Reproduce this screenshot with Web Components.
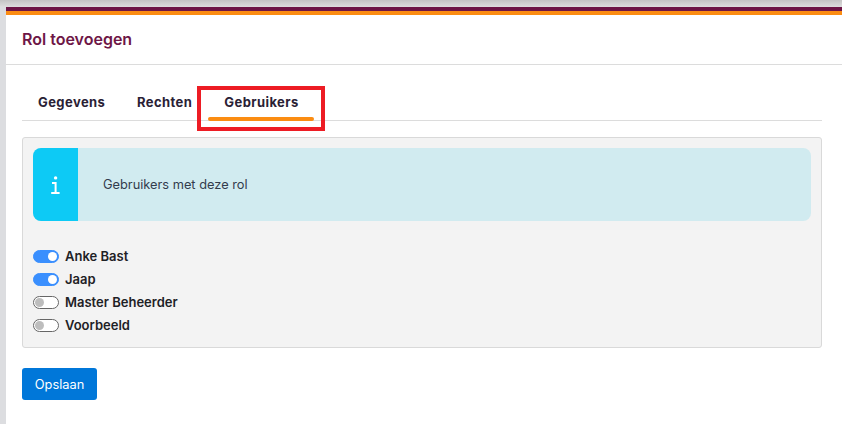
<!DOCTYPE html>
<html lang="nl"><head><meta charset="utf-8"><title>Rol toevoegen</title>
<style>
html,body{margin:0;height:100%;background:#fff;font-family:Inter,"Liberation Sans",sans-serif;overflow:hidden}
</style></head><body>
<role-page>
  <span slot="title">Rol toevoegen</span>
  <tab-bar slot="tabs">
    <tab-item style="--w:99px">Gegevens</tab-item>
    <tab-item style="--w:76px">Rechten</tab-item>
    <tab-item active highlighted style="--w:129px">Gebruikers</tab-item>
  </tab-bar>
  <info-alert>Gebruikers met deze rol</info-alert>
  <user-list>
    <user-toggle checked>Anke Bast</user-toggle>
    <user-toggle checked>Jaap</user-toggle>
    <user-toggle>Master Beheerder</user-toggle>
    <user-toggle>Voorbeeld</user-toggle>
  </user-list>
  <save-button slot="actions">Opslaan</save-button>
</role-page>
<script>
function def(name, css, html){
  customElements.define(name, class extends HTMLElement{
    constructor(){super();this.attachShadow({mode:'open'}).innerHTML='<style>'+css+'</style>'+html;}
  });
}
def('role-page',`
:host{display:flex;flex-direction:column;height:424px;box-sizing:border-box;background:#dcdde0}
.top{flex:none;height:7px;background:linear-gradient(#c4c4c4,#dedede)}
.shell{flex:1;margin-left:6px;background:#fff}
.maroon{height:4px;background:#6e1646}
.orange{height:4px;background:#fb8c12}
.head{height:50px;box-sizing:border-box;border-bottom:1px solid #dcdcdc;padding:0 16px 2px;display:flex;align-items:center}
.title{font-size:16px;font-weight:600;color:#6e1646;line-height:20px}
.body{padding:21px 20px 0 16px}
.panel{margin-top:16px;height:211px;box-sizing:border-box;border:1px solid #d9d9d9;border-radius:3px;background:#f3f3f3;padding:10px}
.actions{margin-top:20px}
`,`<div class="top"></div><div class="shell">
<div class="maroon"></div><div class="orange"></div>
<div class="head"><div class="title"><slot name="title"></slot></div></div>
<div class="body"><slot name="tabs"></slot>
<div class="panel"><slot></slot></div>
<div class="actions"><slot name="actions"></slot></div></div></div>`);
def('tab-bar',`
:host{display:flex;height:35px;box-sizing:border-box;border-bottom:1px solid #dcdcdc;position:relative}
`,`<slot></slot>`);
def('tab-item',`
:host{display:block;position:relative;box-sizing:border-box;width:var(--w);height:35px;text-align:center;padding-top:8px;font-size:13px;line-height:16px;font-weight:700;letter-spacing:.42px;color:#2a2135}
:host(:first-child){text-align:left;padding-left:16px}
:host(:nth-child(2)){text-align:left;padding-left:16px}
.bar{display:none;position:absolute;left:11px;right:12px;bottom:0;height:4px;border-radius:2px;background:#fb8c12}
:host([active]) .bar{display:block}
.mark{display:none;position:absolute;left:0;top:0;width:128px;height:45px;box-sizing:border-box;border:4px solid #ed1c24}
:host([highlighted]) .mark{display:block}
`,`<slot></slot><span class="bar"></span><span class="mark"></span>`);
def('info-alert',`
:host{display:flex;height:73px;border-radius:8px;overflow:hidden;background:#d1ebf0;color:#333c4d;font-size:12.8px;line-height:16px}
.ic{flex:none;width:45px;background:#0dcaf5;display:flex;align-items:center;justify-content:center;color:#fff}
.ic svg{display:block;width:9px;height:18px}
.tx{padding-left:25px;display:flex;align-items:center}
`,`<div class="ic"><svg viewBox="0 0 9 18"><circle cx="4.6" cy="1.9" r="1.7" fill="#fff"/><path d="M1 7H4.6V17M.2 17H8.6" fill="none" stroke="#fff" stroke-width="2"/></svg></div><div class="tx"><slot></slot></div>`);
def('user-list',`
:host{display:flex;flex-direction:column;gap:5px;margin-top:26px}
`,`<slot></slot>`);
def('user-toggle',`
:host{display:flex;align-items:center;gap:6px;height:18px;font-size:13px;font-weight:600;line-height:18px;color:#1e2125}
.sw{flex:none;width:26px;height:13px;margin-top:1px;box-sizing:border-box;border-radius:7px;border:1px solid #666;background:#fff;display:flex;align-items:center;padding:0 1px}
.kn{width:9px;height:9px;border-radius:50%;background:#bdbdbd}
:host([checked]) .sw{background:#3a8ffe;border-color:#3a8ffe;justify-content:flex-end}
:host([checked]) .kn{background:#fff}
`,`<span class="sw"><span class="kn"></span></span><span><slot></slot></span>`);
def('save-button',`
:host{display:inline-flex;align-items:center;justify-content:center;width:75px;height:32px;border-radius:3px;background:#0077d9;color:#fff;font-size:12.8px;font-weight:400}
`,`<slot></slot>`);
</script>
</body></html>
